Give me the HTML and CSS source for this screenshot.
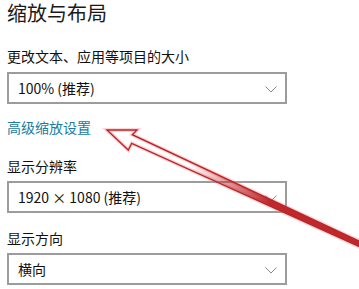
FILE: index.html
```html
<!DOCTYPE html>
<html lang="zh-CN">
<head>
<meta charset="utf-8">
<link rel="stylesheet" href="styles.css">
</head>
<body>
<div class="page">
  <h1 class="title">缩放与布局</h1>
  <div class="label first">更改文本、应用等项目的大小</div>
  <div class="select"><span>100% (推荐)</span><svg class="chev" width="12" height="7" viewBox="0 0 12 7"><path d="M0.5 0.5 L6 6 L11.5 0.5" fill="none" stroke="#8a8a8a" stroke-width="1"/></svg></div>
  <a class="link">高级缩放设置</a>
  <div class="label">显示分辨率</div>
  <div class="select"><span>1920 × 1080 (推荐)</span><svg class="chev" width="12" height="7" viewBox="0 0 12 7"><path d="M0.5 0.5 L6 6 L11.5 0.5" fill="none" stroke="#8a8a8a" stroke-width="1"/></svg></div>
  <div class="label third">显示方向</div>
  <div class="select"><span>横向</span><svg class="chev" width="12" height="7" viewBox="0 0 12 7"><path d="M0.5 0.5 L6 6 L11.5 0.5" fill="none" stroke="#8a8a8a" stroke-width="1"/></svg></div>
</div>
<svg class="arrow" width="359" height="289" viewBox="0 0 359 289">
  <defs>
    <linearGradient id="shaft" gradientUnits="userSpaceOnUse" x1="190" y1="0" x2="270" y2="0">
      <stop offset="0" stop-color="#c0282c" stop-opacity="0"/>
      <stop offset="1" stop-color="#c0282c" stop-opacity="1"/>
    </linearGradient>
  </defs>
  <polygon points="107,130 137,130 132.3,134.7 359,241 359,246.5 131.7,143.3 128.3,150" fill="none" stroke="#f08a8a" stroke-opacity="0.35" stroke-width="4" stroke-linejoin="miter"/>
  <polygon points="107,130 137,130 132.3,134.7 359,241 359,246.5 131.7,143.3 128.3,150" fill="url(#shaft)" stroke="#b8262b" stroke-width="1.4" stroke-linejoin="miter"/>
</svg>
</body>
</html>
```
FILE: styles.css
```css
html, body {
  margin: 0;
  padding: 0;
  background: #ffffff;
}
body {
  width: 359px;
  height: 289px;
  overflow: hidden;
  position: relative;
  font-family: "Noto Sans CJK SC", "Noto Sans", sans-serif;
  color: #111111;
}
.page {
  display: flex;
  flex-direction: column;
  align-items: flex-start;
  padding-left: 7px;
}
.title {
  margin: 0;
  font-size: 20px;
  line-height: 26px;
  font-weight: 400;
  color: #1a1a1a;
}
.label {
  font-size: 14px;
  line-height: 20px;
  margin-top: 19px;
  margin-bottom: 5px;
}
.label.first {
  margin-top: 20px;
  margin-bottom: 6px;
}
.label.third {
  margin-top: 15px;
}
.select {
  box-sizing: border-box;
  width: 280px;
  height: 32px;
  border: 2px solid #9c9c9c;
  display: flex;
  align-items: center;
  justify-content: space-between;
  padding: 0 8px 0 9px;
  font-size: 14px;
  color: #111111;
}
.chev {
  display: block;
  margin-top: 2px;
}
.link {
  margin-top: 13px;
  font-size: 14px;
  line-height: 20px;
  color: #217b9c;
}
.arrow {
  position: absolute;
  left: 0;
  top: 0;
  pointer-events: none;
}
```
